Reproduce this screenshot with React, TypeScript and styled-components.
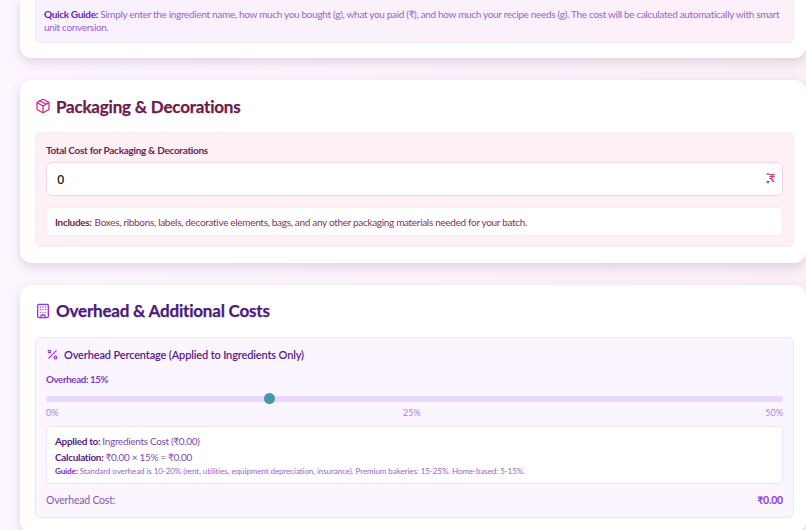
import React from "react"
import styled, { createGlobalStyle } from "styled-components"
import { Package, Building, Percent } from "lucide-react"

const GlobalStyle = createGlobalStyle`
    html, body {
        margin: 0;
        height: 530px;
        overflow: hidden;
    }
    body {
        background: linear-gradient(90deg, #fdf6ff 0%, #fbf0f8 100%);
        font-family: "Lato", "Noto Sans", sans-serif;
    }
`

const Page = styled.div`
    display: flex;
    flex-direction: column;
    gap: 22px;
    padding-left: 20px;
    height: 530px;
    overflow: hidden;
`
const Card = styled.section<{ $clip?: boolean }>`
    background: #fff;
    border-radius: ${props => props.$clip ? "0 0 12px 12px" : "12px"};
    box-shadow: 0 4px 12px rgba(70, 40, 80, 0.16);
    padding: ${props => props.$clip ? "0" : "15px"} 12px 15.5px 15px;
    flex-shrink: 0;
`
const Title = styled.h2<{ $color: string }>`
    display: flex;
    align-items: center;
    gap: 5px;
    margin: 0 0 15px;
    height: 22px;
    font-size: 17px;
    font-weight: 700;
    letter-spacing: -0.2px;
    -webkit-text-stroke: 0.25px currentColor;
    color: ${props => props.$color};
    svg { flex-shrink: 0; }
`
const GuidePanel = styled.div`
    height: 42.5px;
    box-sizing: border-box;
    padding: 8px 8px 0;
    border: 1px solid #f3e6f9;
    border-top: 0;
    border-radius: 0 0 6px 6px;
    background: linear-gradient(90deg, #f8f2fe 0%, #fcf0f9 100%);
    font-size: 10px;
    letter-spacing: -0.32px;
    line-height: 13px;
    color: #9b5fd1;
    strong { color: #6b21c0; }
`
const PinkPanel = styled.div`
    display: flex;
    flex-direction: column;
    padding: 10px;
    border: 1px solid #fbe8f2;
    border-radius: 6px;
    background: #fdf1f7;
`
const PurplePanel = styled.div`
    display: flex;
    flex-direction: column;
    height: 181px;
    box-sizing: border-box;
    padding: 7px 10px 0;
    border: 1px solid #eee5fb;
    border-radius: 6px;
    background: #faf5ff;
`
const FieldLabel = styled.label`
    font-size: 10px;
    letter-spacing: -0.3px;
    line-height: 14px;
    font-weight: 700;
    color: #761c4e;
    margin-bottom: 5px;
`
const InputWrap = styled.div`
    position: relative;
    margin-bottom: 11px;
`
const CostInput = styled.input`
    display: block;
    width: 100%;
    height: 34px;
    box-sizing: border-box;
    padding: 0 12px 0 10px;
    border: 1px solid #f5d5e6;
    border-radius: 6px;
    background: #fff;
    font-family: "Noto Sans", sans-serif;
    font-size: 13px;
    font-weight: 500;
    color: #222;
    outline: none;
    &::-webkit-inner-spin-button {
        -webkit-appearance: none;
    }
`
const Rupee = styled.span`
    position: absolute;
    right: 8px;
    top: 9px;
    font-size: 11px;
    line-height: 14px;
    font-weight: 700;
    color: #d6327f;
`
const Stepper = styled.span`
    position: absolute;
    right: 13.5px;
    top: 10px;
    display: flex;
    flex-direction: column;
    gap: 6px;
    &::before, &::after {
        content: "";
        width: 0;
        height: 0;
        border-left: 2.5px solid transparent;
        border-right: 2.5px solid transparent;
    }
    &::before { border-bottom: 3px solid #9a9a9a; }
    &::after { border-top: 3px solid #777; }
`
const NoteBox = styled.div`
    height: 29px;
    box-sizing: border-box;
    padding: 0 8px;
    display: flex;
    align-items: center;
    gap: 3px;
    border: 1px solid #fbe8f2;
    border-radius: 4px;
    background: #fff;
    font-size: 10px;
    letter-spacing: -0.32px;
    color: #8c2f63;
    strong { color: #761c4e; }
`
const PanelHeading = styled.h3`
    display: flex;
    align-items: center;
    gap: 5px;
    margin: 0 0 7px;
    height: 20px;
    font-size: 11px;
    letter-spacing: -0.15px;
    font-weight: 600;
    color: #581c87;
    svg { color: #9333ea; }
`
const SliderLabel = styled.div`
    font-size: 9.8px;
    letter-spacing: -0.4px;
    line-height: 14px;
    font-weight: 700;
    color: #7e3fb8;
    margin-bottom: 5px;
`
const Slider = styled.input`
    -webkit-appearance: none;
    appearance: none;
    display: block;
    width: 100%;
    height: 6px;
    margin: 5px 0 5px;
    border-radius: 3px;
    background: #e8d8fc;
    outline: none;
    &::-webkit-slider-thumb {
        -webkit-appearance: none;
        width: 11px;
        height: 11px;
        border-radius: 50%;
        background: #4a95a8;
        border: 0;
    }
`
const ScaleRow = styled.div`
    display: flex;
    justify-content: space-between;
    font-size: 9px;
    line-height: 11px;
    color: #ab7fe0;
    margin-bottom: 8px;
`
const InfoBox = styled.div`
    height: 58.5px;
    box-sizing: border-box;
    padding: 6px 8px 0;
    border: 1px solid #eee5fb;
    border-radius: 4px;
    background: #fff;
    font-size: 10px;
    letter-spacing: -0.33px;
    line-height: 16px;
    color: #7e4bb0;
    strong { color: #581c87; }
`
const InfoSmall = styled.div`
    font-size: 8px;
    letter-spacing: -0.07px;
    line-height: 12px;
    color: #9b5fd1;
    strong { color: #7e22ce; }
`
const CostRow = styled.div`
    display: flex;
    justify-content: space-between;
    align-items: center;
    height: 31px;
    font-size: 10.5px;
    letter-spacing: -0.2px;
    color: #8a57bc;
    strong {
        font-weight: 700;
        color: #8b3fcf;
    }
`

const App: React.FC = () => {
    return (
        <>
            <GlobalStyle />
            <Page>
                <Card $clip>
                    <GuidePanel>
                        <strong>Quick Guide:</strong> Simply enter the ingredient name, how much you bought (g), what you paid (₹), and how much your recipe needs (g). The cost will be calculated automatically with smart unit conversion.
                    </GuidePanel>
                </Card>
                <Card>
                    <Title $color="#701a4b">
                        <Package size={16} color="#d6327f" />
                        Packaging &amp; Decorations
                    </Title>
                    <PinkPanel>
                        <FieldLabel>Total Cost for Packaging &amp; Decorations</FieldLabel>
                        <InputWrap>
                            <CostInput type="number" defaultValue={0} />
                            <Stepper />
                            <Rupee>₹</Rupee>
                        </InputWrap>
                        <NoteBox>
                            <strong>Includes:</strong> Boxes, ribbons, labels, decorative elements, bags, and any other packaging materials needed for your batch.
                        </NoteBox>
                    </PinkPanel>
                </Card>
                <Card>
                    <Title $color="#4c1a7d">
                        <Building size={16} color="#9333ea" />
                        Overhead &amp; Additional Costs
                    </Title>
                    <PurplePanel>
                        <PanelHeading>
                            <Percent size={13} />
                            Overhead Percentage (Applied to Ingredients Only)
                        </PanelHeading>
                        <SliderLabel>Overhead: 15%</SliderLabel>
                        <Slider type="range" min={0} max={50} defaultValue={15} />
                        <ScaleRow>
                            <span>0%</span>
                            <span>25%</span>
                            <span>50%</span>
                        </ScaleRow>
                        <InfoBox>
                            <div><strong>Applied to:</strong> Ingredients Cost (₹0.00)</div>
                            <div><strong>Calculation:</strong> ₹0.00 × 15% = ₹0.00</div>
                            <InfoSmall>
                                <strong>Guide:</strong> Standard overhead is 10-20% (rent, utilities, equipment depreciation, insurance). Premium bakeries: 15-25%. Home-based: 5-15%.
                            </InfoSmall>
                        </InfoBox>
                        <CostRow>
                            <span>Overhead Cost:</span>
                            <strong>₹0.00</strong>
                        </CostRow>
                    </PurplePanel>
                </Card>
            </Page>
        </>
    )
}

export default App
